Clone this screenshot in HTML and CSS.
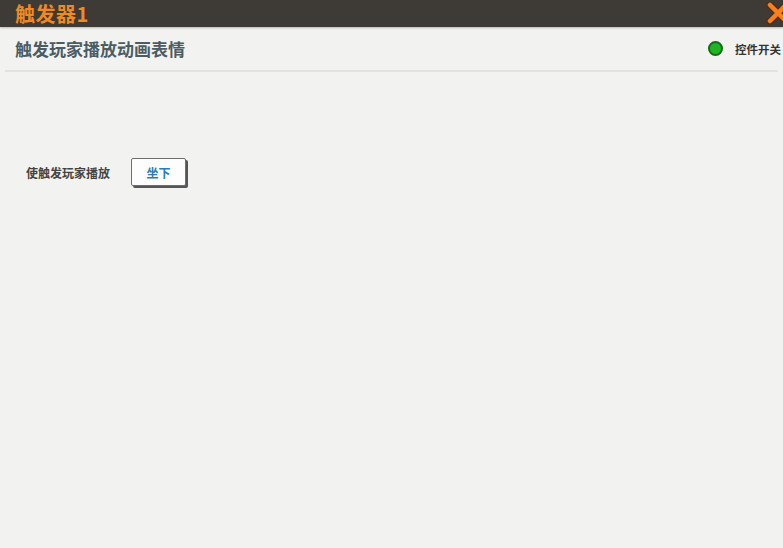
FILE: index.html
```html
<!DOCTYPE html>
<html lang="zh">
<head>
    <meta charset="UTF-8">
    <title>触发器1</title>
    <link rel="stylesheet" href="styles.css">
</head>
<body>
    <div class="title-bar">
        <span class="title">触发器1</span>
        <svg class="close" width="24" height="24" viewBox="0 0 24 24">
            <path d="M4 4 L20 20 M20 4 L4 20" stroke="#5a2a10" stroke-width="7" stroke-linecap="round"/>
            <path d="M4 4 L20 20 M20 4 L4 20" stroke="#f5821f" stroke-width="4.5" stroke-linecap="round"/>
        </svg>
    </div>
    <div class="panel">
        <div class="panel-head">
            <h2>触发玩家播放动画表情</h2>
            <div class="switch">
                <span class="dot"></span>
                <span>控件开关</span>
            </div>
        </div>
        <div class="row">
            <label>使触发玩家播放</label>
            <button class="btn">坐下</button>
        </div>
    </div>
</body>
</html>
```

FILE: styles.css
```css
body {
    margin: 0;
    width: 783px;
    height: 548px;
    overflow: hidden;
    background: #f2f2f0;
    font-family: "Noto Sans CJK SC", "Noto Sans", sans-serif;
}
.title-bar {
    height: 27px;
    background: #3e3b37;
    display: flex;
    align-items: center;
    justify-content: space-between;
    padding-left: 15px;
    box-shadow: 0 1px 2px rgba(0, 0, 0, 0.25);
    position: relative;
}
.title {
    color: #f08a1e;
    font-size: 20px;
    font-weight: bold;
    line-height: 27px;
    letter-spacing: 0.5px;
}
.close {
    margin-right: -7px;
    margin-top: -2px;
}
.panel {
    padding: 0 5px;
}
.panel-head {
    display: flex;
    align-items: center;
    justify-content: space-between;
    height: 43px;
    border-bottom: 2px solid #e2e3e1;
    padding: 0 0 0 10px;
}
.panel-head h2 {
    margin: 0;
    font-size: 17px;
    font-weight: bold;
    color: #4b5c63;
}
.switch {
    display: flex;
    align-items: center;
    gap: 12px;
    font-size: 11.5px;
    font-weight: bold;
    color: #333;
    margin-right: -3px;
}
.dot {
    width: 11px;
    height: 11px;
    border-radius: 50%;
    background: #1fb424;
    border: 2px solid #14691a;
}
.row {
    display: flex;
    align-items: center;
    gap: 21px;
    padding: 86px 0 0 21px;
}
.row label {
    font-size: 12px;
    font-weight: bold;
    color: #444;
}
.btn {
    width: 55px;
    height: 28px;
    background: #fdfdfd;
    border: 1px solid #6e6e6e;
    border-radius: 2px;
    box-shadow: 2px 2px 0 #555;
    color: #2a7cb5;
    font-family: inherit;
    font-size: 12px;
    font-weight: bold;
    padding: 0;
}
```
